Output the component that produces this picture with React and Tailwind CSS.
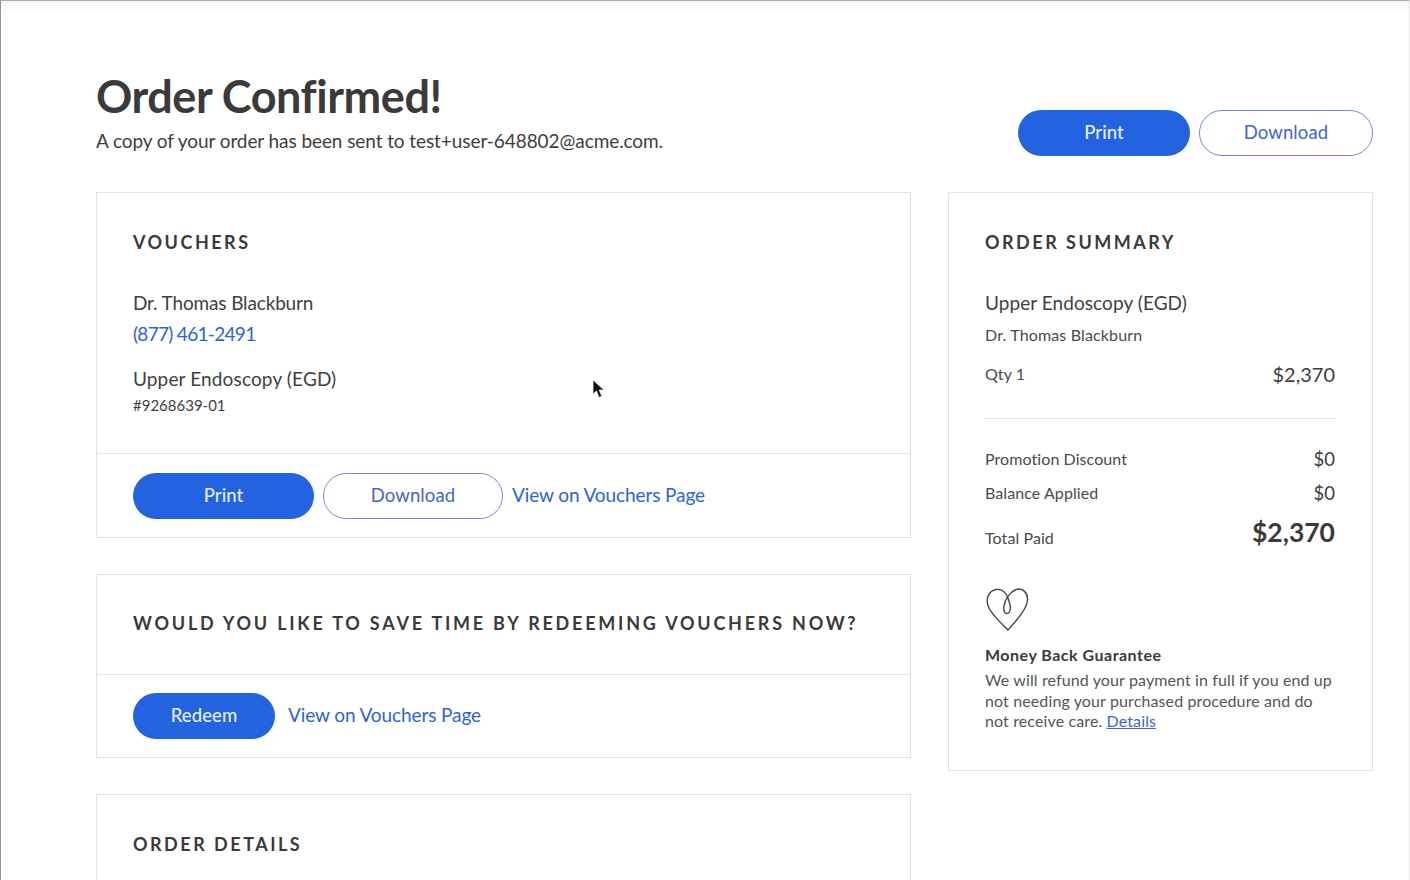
const sans = "font-['Lato','Noto_Sans',sans-serif]";

function Primary({ className, children }) {
  return (
    <button className={"h-[46px] rounded-full bg-[#2463e0] pb-[1px] text-[18.5px] font-medium tracking-[0.1px] text-[#e6eeff] " + className}>
      {children}
    </button>
  );
}

function Outline({ className, children }) {
  return (
    <button className={"h-[46px] rounded-full border border-[#6f8bd8] bg-white pb-[1px] text-[18.5px] tracking-[0.1px] text-[#3f66d0] " + className}>
      {children}
    </button>
  );
}

function Heading({ children, className }) {
  return <h2 className={"text-[18px] leading-[24px] font-bold text-[#3a3a3a] " + (className || "tracking-[2.5px]")}>{children}</h2>;
}

function Line({ label, value, className, valueClass }) {
  return (
    <div className={"flex justify-between " + className}>
      <span className="text-[16px] leading-[22px] tracking-[0.08px] text-[#4a4a4a]">{label}</span>
      <span className={valueClass || "text-[20px] leading-[24px] text-[#3f3f3f]"}>{value}</span>
    </div>
  );
}

function Heart() {
  return (
    <svg width="44" height="46" viewBox="0 0 44 46" fill="none" stroke="#444" strokeWidth="1.4" strokeLinecap="round" strokeLinejoin="round">
      <path d="M23 44 C16 37 8 30 4 22 C0 14 3 5 11 3.5 C17 2.5 21 7 23 12 C25 18 27 24 23.5 27 C20.5 29 18 25.5 19 20 C20 13 25 6 31 3.5 C38 1.5 43 7 42.5 14 C42 23 31 35 23 44 Z" />
    </svg>
  );
}

function Cursor() {
  return (
    <svg className="absolute left-[591px] top-[378px]" width="14" height="21" viewBox="0 0 14 21">
      <path d="M1 1 L1 15 L4.5 12 L7 18.5 L9.8 17.3 L7.2 11 L12 11 Z" fill="#111" stroke="#fff" strokeWidth="0.7" />
    </svg>
  );
}

export default function App() {
  return (
    <div className={"relative h-[880px] w-[1410px] overflow-hidden border-t border-l border-r border-t-[#a6adb8] border-l-[#8e95a1] border-r-[#e4e4e4] bg-white pl-[95px] pr-[36px] pt-[70px] " + sans}>
      <div className="absolute inset-x-0 top-0 h-[14px] bg-gradient-to-b from-[#f6f6f6] to-white" />
      <div className="relative flex justify-between">
        <div>
          <h1 className="text-[45px] leading-[50px] font-bold tracking-[-0.45px] text-[#3a3a3a]">Order Confirmed!</h1>
          <p className="mt-[7px] text-[19px] leading-[26px] tracking-[-0.08px] text-[#3d3d3d]">A copy of your order has been sent to test+user-648802@acme.com.</p>
        </div>
        <div className="mt-[39px] flex gap-[9px]">
          <Primary className="w-[172px]">Print</Primary>
          <Outline className="w-[174px]">Download</Outline>
        </div>
      </div>

      <div className="mt-[36px] flex gap-[37px]">
        <div className="flex w-[815px] flex-col gap-[36px]">
          <section className="h-[346px] border border-[#e3e3e3]">
            <div className="h-[261px] border-b border-[#e6e6e6] px-[36px] pt-[37px]">
              <Heading>VOUCHERS</Heading>
              <p className="mt-[37px] text-[19px] leading-[24px] tracking-[-0.15px] text-[#3f3f3f]">Dr. Thomas Blackburn</p>
              <p className="mt-[7px] text-[19px] leading-[24px] tracking-[-0.7px] text-[#2f62d6]">(877) 461-2491</p>
              <p className="mt-[21px] text-[19px] leading-[24px] tracking-[0.14px] text-[#3f3f3f]">Upper Endoscopy (EGD)</p>
              <p className="mt-[3px] text-[15px] leading-[22px] text-[#3f3f3f]">#9268639-01</p>
            </div>
            <div className="flex items-center gap-[9px] px-[36px] pt-[19px]">
              <Primary className="w-[181px]">Print</Primary>
              <Outline className="w-[180px]">Download</Outline>
              <a className="pb-[2px] text-[19px] tracking-[-0.1px] text-[#2f62d6]">View on Vouchers Page</a>
            </div>
          </section>

          <section className="h-[184px] border border-[#e3e3e3]">
            <div className="h-[100px] border-b border-[#e6e6e6] px-[36px] pt-[36px]">
              <Heading className="tracking-[2.77px]">WOULD YOU LIKE TO SAVE TIME BY REDEEMING VOUCHERS NOW?</Heading>
            </div>
            <div className="flex items-center gap-[13px] px-[36px] pt-[18px]">
              <Primary className="w-[142px]">Redeem</Primary>
              <a className="pb-[2px] text-[19px] tracking-[-0.1px] text-[#2f62d6]">View on Vouchers Page</a>
            </div>
          </section>

          <section className="h-[200px] border border-[#e3e3e3] px-[36px] pt-[37px]">
            <Heading>ORDER DETAILS</Heading>
          </section>
        </div>

        <aside className="h-[579px] w-[425px] border border-[#e3e3e3] pl-[36px] pr-[37px] pt-[37px]">
          <Heading>ORDER SUMMARY</Heading>
          <p className="mt-[37px] text-[19px] leading-[24px] tracking-[0.07px] text-[#3f3f3f]">Upper Endoscopy (EGD)</p>
          <p className="mt-[9px] text-[16px] leading-[22px] tracking-[0.15px] text-[#4a4a4a]">Dr. Thomas Blackburn</p>
          <Line label="Qty 1" value="$2,370" className="mt-[16px] items-center" />
          <div className="mt-[32px] border-t border-[#e3e3e3]" />
          <Line label="Promotion Discount" value="$0" className="mt-[28px] items-center" valueClass="text-[18.5px] leading-[24px] text-[#3f3f3f]" />
          <Line label="Balance Applied" value="$0" className="mt-[10px] items-center" valueClass="text-[18.5px] leading-[24px] text-[#3f3f3f]" />
          <Line label="Total Paid" value="$2,370" className="mt-[10px] items-end" valueClass="text-[26.5px] leading-[34px] font-bold text-[#3a3a3a]" />
          <div className="mt-[37px]"><Heart /></div>
          <p className="mt-[12px] text-[16px] leading-[22px] font-bold tracking-[0.5px] text-[#3a3a3a]">Money Back Guarantee</p>
          <p className="mt-[4px] text-[16px] leading-[20.5px] tracking-[0.12px] text-[#555]">
            We will refund your payment in full if you end up not needing your purchased procedure and do not receive care. <a className="text-[#3f66d0] underline">Details</a>
          </p>
        </aside>
      </div>
      <Cursor />
    </div>
  );
}
